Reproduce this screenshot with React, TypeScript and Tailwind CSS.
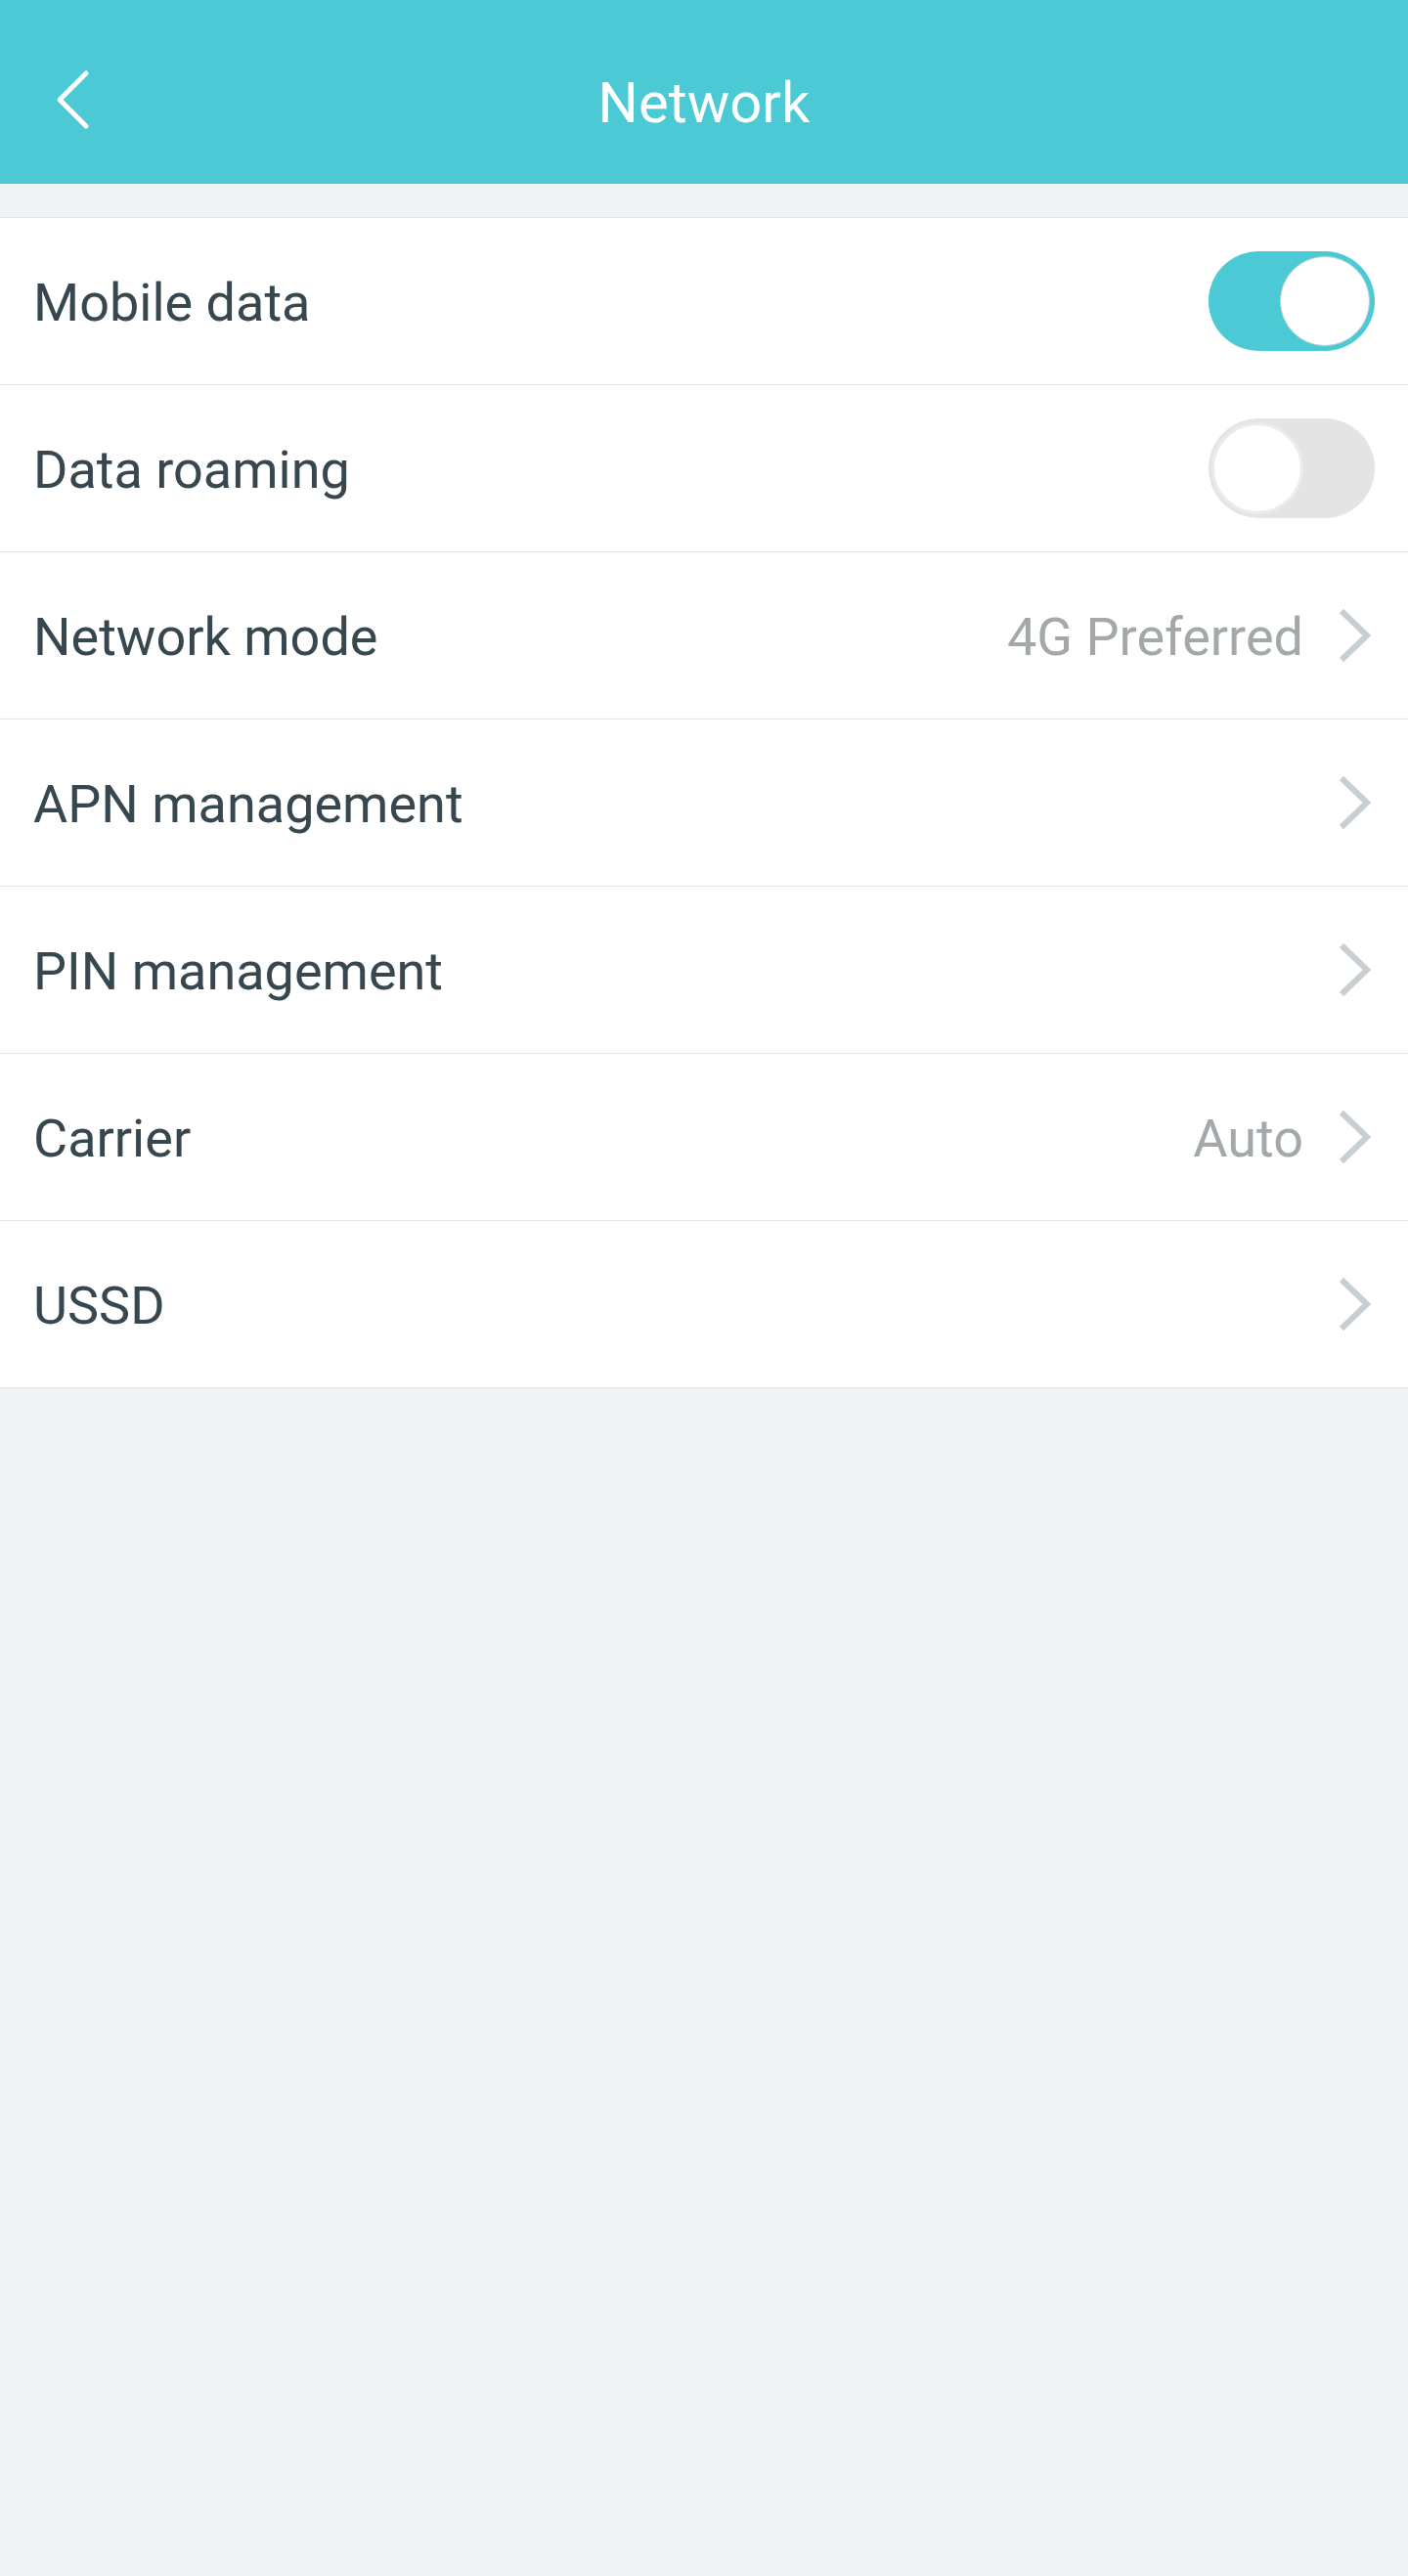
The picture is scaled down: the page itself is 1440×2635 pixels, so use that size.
import React from "react";

type Row =
  | { kind: "toggle"; label: string; on: boolean }
  | { kind: "link"; label: string; value?: string };

const rows: Row[] = [
  { kind: "toggle", label: "Mobile data", on: true },
  { kind: "toggle", label: "Data roaming", on: false },
  { kind: "link", label: "Network mode", value: "4G Preferred" },
  { kind: "link", label: "APN management" },
  { kind: "link", label: "PIN management" },
  { kind: "link", label: "Carrier", value: "Auto" },
  { kind: "link", label: "USSD" },
];

function Toggle({ on }: { on: boolean }) {
  if (on) {
    return (
      <div className="flex h-[102px] w-[170px] items-center justify-end rounded-full bg-[#4bcad5] pr-[5px]">
        <div className="h-[92px] w-[92px] rounded-full border border-[#c9cfd1] bg-white" />
      </div>
    );
  }
  return (
    <div className="flex h-[102px] w-[170px] items-center rounded-full bg-[#e4e4e4] pl-[3px]">
      <div className="h-[94px] w-[94px] rounded-full border-[3px] border-[#ebebeb] bg-white" />
    </div>
  );
}

function Chevron() {
  return (
    <svg width="34" height="56" viewBox="0 0 34 56" className="ml-[36px] shrink-0">
      <path d="M3 3 L29 28 L3 53" fill="none" stroke="#c7cfd2" strokeWidth="6" strokeLinejoin="miter" strokeLinecap="butt" />
    </svg>
  );
}

export default function App() {
  return (
    <div
      className="min-h-[2635px] bg-[#eff3f6]"
      style={{ fontFamily: "Roboto, 'Noto Sans', 'Liberation Sans', sans-serif" }}
    >
      <header className="grid h-[188px] grid-cols-[1fr_auto_1fr] items-center bg-[#4bcad6] pt-[22px]">
        <div className="flex items-center">
          <svg width="36" height="62" viewBox="0 0 36 62" className="mb-[6px] ml-[56px]">
            <path d="M32 4 L5 31 L32 58" fill="none" stroke="#ffffff" strokeWidth="5" strokeLinecap="round" strokeLinejoin="round" />
          </svg>
        </div>
        <h1 className="text-[58px] font-normal leading-none text-white">Network</h1>
        <div />
      </header>

      <div className="mt-[34px] border-t border-[#e3e5e7] bg-white">
        {rows.map((r) => (
          <div
            key={r.label}
            className="flex h-[171px] items-center border-b border-[#e3e5e7] pl-[34px] pr-[34px]"
          >
            <span className="flex-1 pt-[3px] text-[54px] leading-none text-[#37474f]">{r.label}</span>
            {r.kind === "toggle" ? (
              <Toggle on={r.on} />
            ) : (
              <div className="flex items-center pr-[3px]">
                {r.value && (
                  <span className="pt-[3px] text-[54px] leading-none text-[#a3a8ab]">{r.value}</span>
                )}
                <Chevron />
              </div>
            )}
          </div>
        ))}
      </div>
    </div>
  );
}
